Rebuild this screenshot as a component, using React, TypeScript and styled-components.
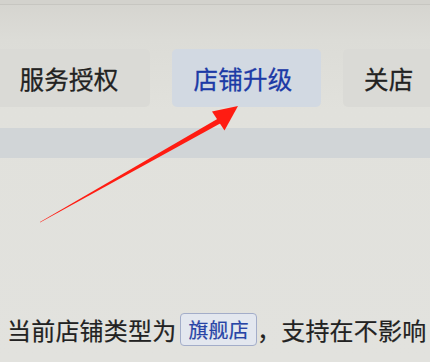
import styled, { createGlobalStyle } from "styled-components"

const GlobalStyle = createGlobalStyle`
  html, body {
    margin: 0;
    padding: 0;
    background: #e1e1dd;
    overflow: hidden;
  }
  body {
    font-family: "Noto Sans CJK SC", "Noto Sans", sans-serif;
  }
`

// Layout
const Page = styled.div`
  position: relative;
  width: 430px;
  height: 362px;
  overflow: hidden;
  background: linear-gradient(180deg, #d5d4cf 0px, #dcdcd7 40px, #e1e1dc 110px, #e2e2de 100%);
`
const TopEdge = styled.div`
  height: 4px;
  border-bottom: 1px solid #c7c6c1;
  background: #d3d2cd;
`
const TabBar = styled.div`
  display: flex;
  gap: 22px;
  padding-top: 44px;
  height: 58px;
  margin-left: -5px;
`
const Tab = styled.div<{ $active?: boolean; $width: number }>`
  flex: 0 0 ${props => props.$width}px;
  box-sizing: border-box;
  display: flex;
  align-items: center;
  justify-content: center;
  padding-right: 7px;
  border-radius: 5px;
  background: ${props => props.$active ? '#d2d9e2' : '#dadad6'};
  color: ${props => props.$active ? '#1c3aa6' : '#222222'};
  font-size: 24.5px;
  font-weight: 400;
  letter-spacing: 0.3px;
  -webkit-text-stroke: 0.3px currentColor;
`
const Band = styled.div`
  margin-top: 21px;
  height: 30px;
  background: #d1d5d7;
`
const Sentence = styled.div`
  position: absolute;
  left: 7px;
  top: 312px;
  display: flex;
  align-items: center;
  white-space: nowrap;
  font-size: 24px;
  color: #222222;
  letter-spacing: 0.2px;
  -webkit-text-stroke: 0.2px currentColor;
`
const Tag = styled.span`
  display: inline-flex;
  align-items: center;
  height: 31px;
  padding: 0 7px;
  margin: 0 0 0 4px;
  border: 1px solid #a3adc9;
  border-radius: 4px;
  background: #e3e7ef;
  color: #2744a6;
  font-size: 20px;
`
const Arrow = styled.svg`
  position: absolute;
  left: 0;
  top: 0;
  pointer-events: none;
`

export default function App() {
  return (
    <>
      <GlobalStyle />
      <Page>
        <TopEdge />
        <TabBar>
          <Tab $width={155}>服务授权</Tab>
          <Tab $width={149} $active>店铺升级</Tab>
          <Tab $width={110} style={{ justifyContent: 'flex-start', paddingLeft: 21 }}>关店</Tab>
        </TabBar>
        <Band />
        <Sentence>
          当前店铺类型为<Tag>旗舰店</Tag>，支持在不影响
        </Sentence>
        <Arrow width="430" height="362" viewBox="0 0 430 362">
          <polygon points="40,222 219,118 221.5,122.8 40,222.6" fill="#ff1c12" />
          <polygon points="238,106 212,111.5 224.5,130.5" fill="#ff1c12" />
        </Arrow>
      </Page>
    </>
  )
}
